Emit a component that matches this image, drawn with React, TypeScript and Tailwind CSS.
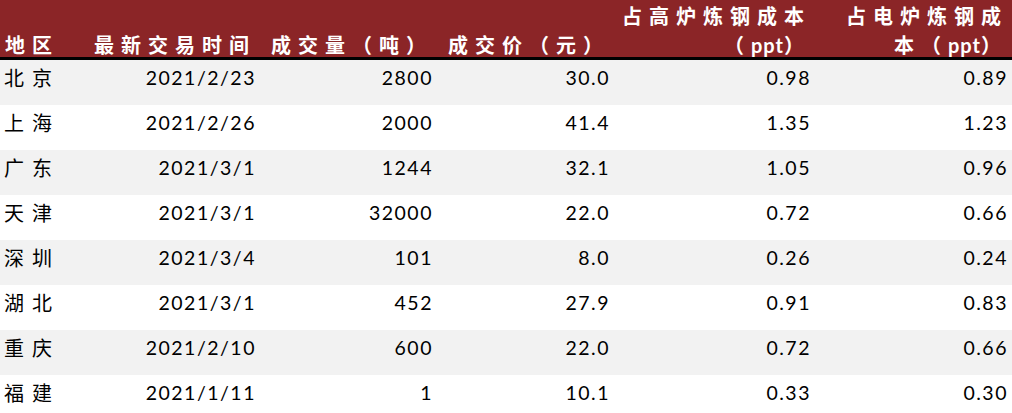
import React from "react";

const rows: string[][] = [
  ["北京", "2021/2/23", "2800", "30.0", "0.98", "0.89"],
  ["上海", "2021/2/26", "2000", "41.4", "1.35", "1.23"],
  ["广东", "2021/3/1", "1244", "32.1", "1.05", "0.96"],
  ["天津", "2021/3/1", "32000", "22.0", "0.72", "0.66"],
  ["深圳", "2021/3/4", "101", "8.0", "0.26", "0.24"],
  ["湖北", "2021/3/1", "452", "27.9", "0.91", "0.83"],
  ["重庆", "2021/2/10", "600", "22.0", "0.72", "0.66"],
  ["福建", "2021/1/11", "1", "10.1", "0.33", "0.30"],
];

const cjk = "font-['Noto_Sans_CJK_SC',sans-serif]";
const num = "font-['Lato','Noto_Sans_CJK_SC',sans-serif]";

export default function App() {
  return (
    <div className="w-[1012px] h-[413px] overflow-hidden bg-white">
      <div
        className={`h-[60px] bg-[#8B2527] border-b-[3px] border-black grid grid-cols-[90px_166px_177px_177px_201px_197px] items-start pt-[2px] text-white font-bold text-[20px] leading-[29px] tracking-[7px] ${num}`}
      >
        <div className="pl-[5px] pt-[29px]">地区</div>
        <div className="text-right pt-[29px]">最新交易时间</div>
        <div className="text-right pt-[29px]">成交量（吨）</div>
        <div className="text-right pt-[29px]">成交价（元）</div>
        <div className="text-right">
          占高炉炼钢成本
          <br />
          （<span className="tracking-[1px]">ppt</span>）
        </div>
        <div className="text-right">
          占电炉炼钢成
          <br />
          本（<span className="tracking-[1px]">ppt</span>）
        </div>
      </div>
      {rows.map((r, i) => (
        <div
          key={r[0]}
          className={`h-[45px] grid grid-cols-[90px_166px_177px_177px_201px_197px] items-center pb-[9px] text-black ${
            i % 2 === 0 ? "bg-[#F2F2F2]" : "bg-white"
          }`}
        >
          <div className={`pl-[4px] text-[20px] tracking-[8px] ${cjk}`}>{r[0]}</div>
          {r.slice(1).map((v, j) => (
            <div key={j} className={`text-right text-[19.5px] tracking-[1.5px] ${num}`}>
              {v}
            </div>
          ))}
        </div>
      ))}
    </div>
  );
}
